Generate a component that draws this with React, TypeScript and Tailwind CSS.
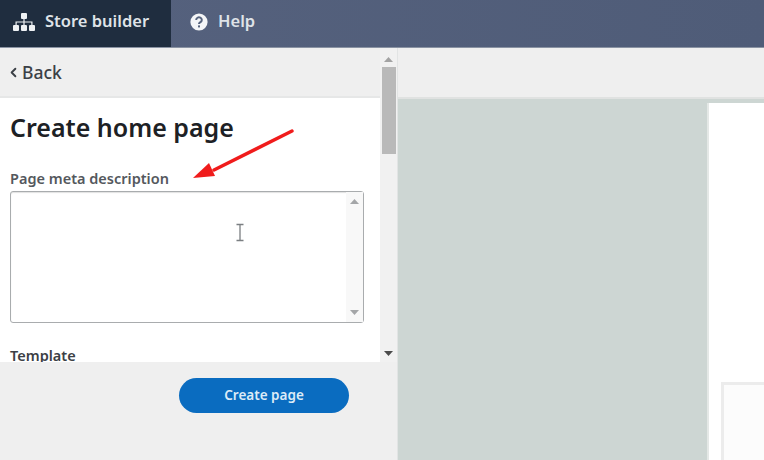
import React from "react";
import { ChevronLeft } from "lucide-react";

function SitemapIcon() {
    return (
        <svg width="22" height="18" viewBox="0 0 22 18" fill="#eef1f4">
            <rect x="8" y="0" width="6" height="6" rx="1" />
            <rect x="0" y="12" width="6" height="6" rx="1" />
            <rect x="8" y="12" width="6" height="6" rx="1" />
            <rect x="16" y="12" width="6" height="6" rx="1" />
            <path d="M10.4 6h1.2v2.4H19.5V12h-1.2V9.6h-6.7V12h-1.2V9.6H3.7V12H2.5V8.4h7.9z" />
        </svg>
    );
}

function HelpIcon() {
    return (
        <svg width="18" height="18" viewBox="0 0 18 18">
            <circle cx="9" cy="9" r="8.6" fill="#f4f5f7" />
            <path d="M6.2 7a2.8 2.6 0 1 1 4.4 2.1c-.9.6-1.6 1-1.6 2" fill="none" stroke="#56637d" strokeWidth="2" />
            <rect x="8" y="12.4" width="2" height="2" fill="#56637d" />
        </svg>
    );
}

function Triangle({ down, color }: { down?: boolean; color: string }) {
    return (
        <svg width="9" height="5" viewBox="0 0 9 5" fill={color}>
            <path d={down ? "M0 0h9L4.5 5z" : "M0 5h9L4.5 0z"} />
        </svg>
    );
}

export default function App() {
    return (
        <div className="relative w-[764px] h-[460px] overflow-hidden flex flex-col bg-[#cdd6d3] font-['Noto_Sans',sans-serif]">
            {/* top nav */}
            <div className="h-[48px] shrink-0 flex bg-gradient-to-r from-[#56627e] to-[#4f5c78] border-b border-[#8a93a3]">
                <div className="w-[171px] bg-[#1f2d3f] flex items-center pl-[13px] pb-[4px] gap-[10px]">
                    <SitemapIcon />
                    <span className="text-[16.5px] font-semibold text-[#dfe3e8] leading-none">Store builder</span>
                </div>
                <div className="flex items-center pl-[19px] pb-[4px] gap-[10px]">
                    <HelpIcon />
                    <span className="text-[16.5px] font-semibold text-[#dfe3e8] leading-none">Help</span>
                </div>
            </div>

            <div className="flex-1 flex min-h-0">
                {/* left panel */}
                <div className="w-[398px] shrink-0 flex flex-col bg-[#efefef] border-r border-[#e2e4e4]">
                    <div className="flex-1 flex min-h-0">
                        <div className="w-[380px] flex flex-col">
                            <div className="h-[50px] shrink-0 flex items-center pl-[6px] gap-[1px] border-b-2 border-[#e6e7e7]">
                                <ChevronLeft size={15} strokeWidth={3} className="text-[#3b4046]" />
                                <span className="text-[17.5px] font-medium text-[#3b4046]">Back</span>
                            </div>
                            <div className="h-[264px] bg-white pl-[10px] pr-[16px] overflow-hidden">
                                <h1 className="mt-[13px] text-[25px] leading-[32px] font-semibold text-[#1d2125]">Create home page</h1>
                                <div className="mt-[26px] text-[14.5px] leading-[18px] font-semibold text-[#54585d]">Page meta description</div>
                                <div className="mt-[4px] h-[132px] flex justify-end bg-white border border-[#a9acae] rounded-[3px] shadow-[inset_0_1px_1px_rgba(0,0,0,0.12)]">
                                    <div className="w-[17px] h-full flex flex-col items-center justify-between py-[7px] bg-[#f8f8f8]">
                                        <Triangle color="#a4a6a8" />
                                        <Triangle down color="#a4a6a8" />
                                    </div>
                                </div>
                                <div className="mt-[25px] text-[14.5px] leading-[14px] font-semibold text-[#3c4045]">Template</div>
                            </div>
                        </div>
                        {/* panel scrollbar */}
                        <div className="w-[17px] h-[314px] flex flex-col items-center bg-[#f1f1f1]">
                            <div className="h-[19px] flex items-center justify-center pt-[4px]">
                                <Triangle color="#a3a3a3" />
                            </div>
                            <div className="w-[14px] h-[87px] bg-[#b9b9b9]" />
                            <div className="flex-1 flex items-end pb-[6px]">
                                <Triangle down color="#4a4a4a" />
                            </div>
                        </div>
                    </div>
                    <div className="h-[98px] shrink-0 flex justify-end pt-[16px] pr-[48px]">
                        <button className="w-[170px] h-[35px] rounded-full bg-[#0a6cc0] text-[13.5px] font-semibold text-[#dcebf7]">
                            Create page
                        </button>
                    </div>
                </div>

                {/* preview */}
                <div className="flex-1 flex flex-col min-w-0">
                    <div className="h-[51px] shrink-0 bg-[#efefef] border-b-2 border-[#e0e2e1]" />
                    <div className="flex-1 flex justify-end pt-[4px]">
                        <div className="w-[57px] bg-white border-l-2 border-[#e4e8e6] flex flex-col">
                            <div className="mt-[279px] ml-[12px] flex-1 bg-[#fcfcfc] border-l-[3px] border-t-[3px] border-[#ececec]" />
                        </div>
                    </div>
                </div>
            </div>

            {/* annotation arrow over the form */}
            <svg className="absolute left-[190px] top-[126px]" width="106" height="56" viewBox="0 0 106 56">
                <path d="M102 5L24 44" stroke="#f01c1c" strokeWidth="3.4" strokeLinecap="round" />
                <path d="M3 52L19 37L25 50z" fill="#f01c1c" />
            </svg>

            {/* text cursor */}
            <svg className="absolute left-[235px] top-[223px]" width="10" height="20" viewBox="0 0 10 20" fill="none" stroke="#7b7f82" strokeWidth="1.3">
                <path d="M1.5 1.5h7M5 1.5v16M1.5 17.5h7" />
            </svg>
        </div>
    );
}
